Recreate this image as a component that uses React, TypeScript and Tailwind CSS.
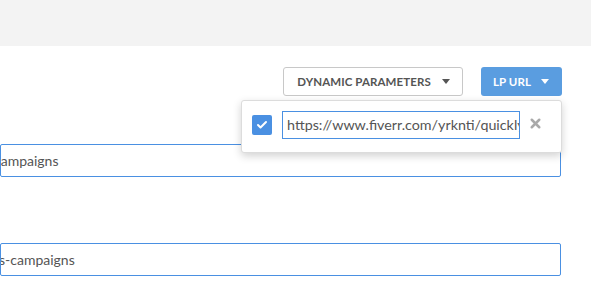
import { Check, X } from 'lucide-react';

function Caret({ color, gap }: { color: string; gap: string }) {
  return (
    <svg width="8" height="5" viewBox="0 0 8 5" className={gap}>
      <path d="M0 0h8L4 5z" fill={color} />
    </svg>
  );
}

export default function App() {
  return (
    <div className="w-[591px] h-[286px] overflow-hidden bg-white font-['Lato','Liberation_Sans',sans-serif] text-[#555]">
      <div className="h-[46px] bg-[#f3f3f3]" />

      <div className="relative">
        {/* Toolbar */}
        <div className="flex justify-end gap-[18px] pt-[21px] pr-[29px]">
          <button className="flex items-center h-[29px] pl-[13px] pr-[12px] border border-[#c8c8c8] rounded-[3px] bg-white text-[11.5px] font-bold text-[#555] tracking-[0.1px]">
            DYNAMIC PARAMETERS
            <Caret color="#555" gap="ml-[11px]" />
          </button>
          <button className="flex items-center h-[29px] pl-[12px] pr-[13px] rounded-[3px] bg-[#5a9de0] text-[11.5px] font-bold text-white tracking-[0.1px]">
            LP URL
            <Caret color="#fff" gap="ml-[10px]" />
          </button>
        </div>

        {/* LP URL dropdown */}
        <div className="absolute left-[241px] top-[54px] w-[321px] h-[53px] bg-white border border-[#dcdcdc] rounded-[3px] shadow-[0_3px_8px_rgba(0,0,0,0.18)] z-10 flex items-start pt-[10px] pl-[10px]">
          <span className="mt-[4px] w-[20px] h-[20px] rounded-[2px] bg-[#4a90e2] flex items-center justify-center">
            <Check size={12} strokeWidth={4} color="#fff" />
          </span>
          <div className="ml-[10px] w-[238px] h-[28px] border border-[#4a90e2] flex items-center pl-[4px] overflow-hidden whitespace-nowrap text-[14.3px] text-[#555]">
            https://www.fiverr.com/yrknti/quickly-set-up-your-campaigns
          </div>
          <span className="ml-[8px] mt-[5px]">
            <X size={15} strokeWidth={4} color="#a9a9a9" />
          </span>
        </div>

        {/* Fields */}
        <div className="pr-[30px] pt-[48px] flex flex-col gap-[66px]">
          <div className="h-[33px] border border-[#4a90e2] rounded-[2px] flex items-center overflow-hidden whitespace-nowrap text-[14px] text-[#555]">
            <span className="ml-[-7px]">campaigns</span>
          </div>
          <div className="h-[33px] border border-[#4a90e2] rounded-[2px] flex items-center overflow-hidden whitespace-nowrap text-[14px] text-[#555]">
            <span className="ml-[-2px]">s-campaigns</span>
          </div>
        </div>
      </div>
    </div>
  );
}
